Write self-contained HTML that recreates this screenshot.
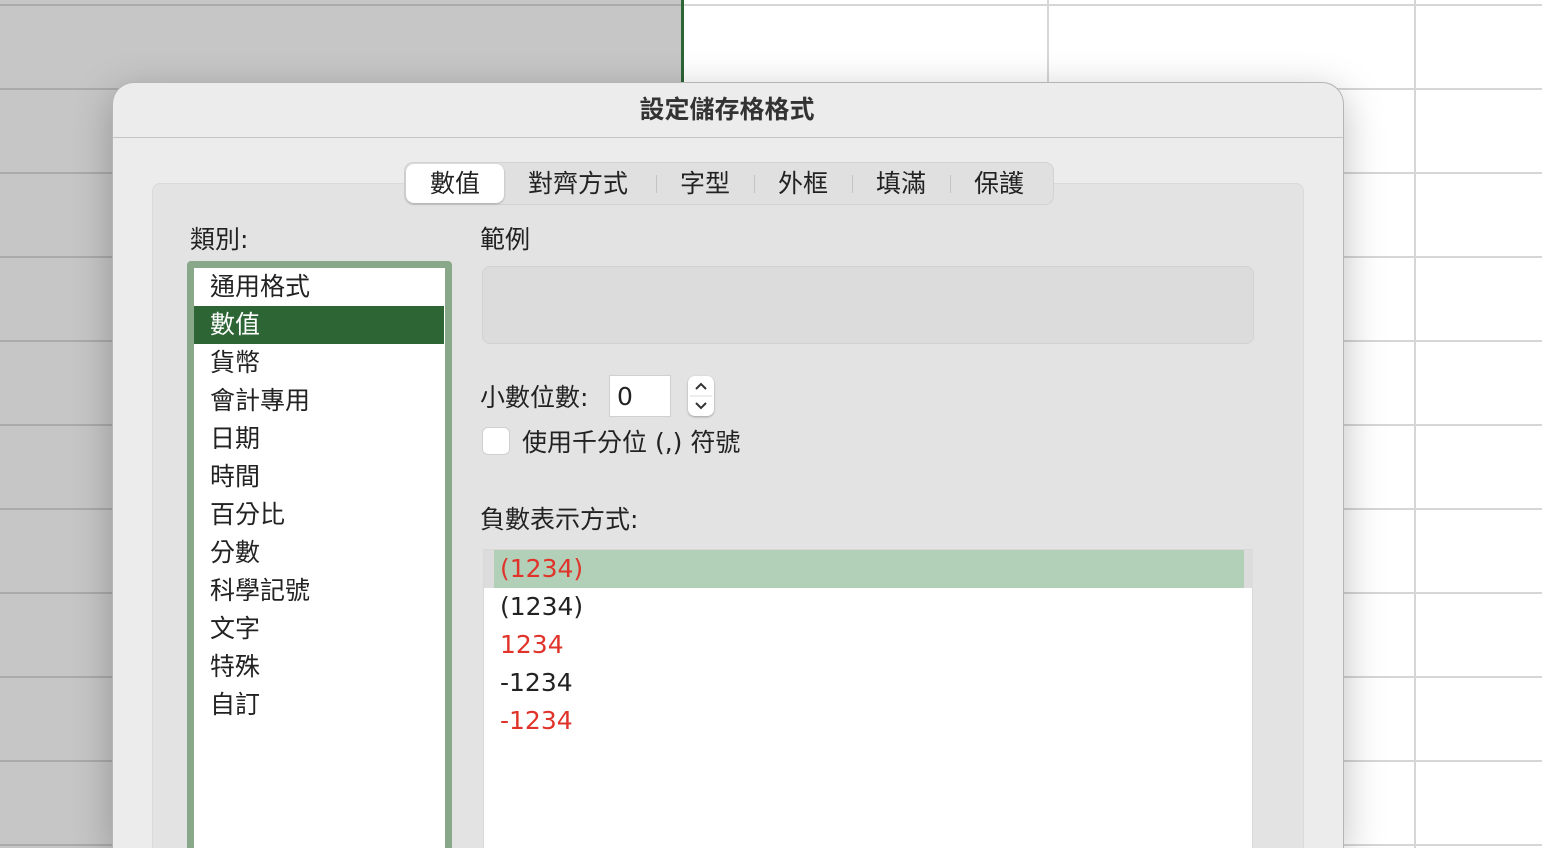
<!DOCTYPE html>
<html style="overflow:hidden;height:848px"><head><meta charset="utf-8"><style>
*{margin:0;padding:0;box-sizing:border-box}
html,body{width:1542px;height:848px;overflow:hidden}
body{position:relative;background:#fff;font-family:"DejaVu Sans","Noto Sans CJK TC",sans-serif;color:#222}
.abs{position:absolute}
.left{left:0;top:0;width:682px;height:848px;background:#c6c6c6}
.hl{position:absolute;height:2px;background:#aaa;left:0;width:682px}
.hr{position:absolute;height:2px;background:#d6d6d6;left:684px;width:858px}
.dlg{left:112px;top:82px;width:1232px;height:766px;background:#ececec;border-radius:22px 22px 0 0;border:1px solid #b5b5b5;border-bottom:none;box-shadow:0 10px 40px rgba(0,0,0,.25)}
.panel{left:152px;top:183px;width:1152px;height:665px;background:#e3e3e3;border:1px solid #dadada;border-bottom:none;border-radius:8px 8px 0 0}
.tabs{left:404px;top:162px;width:650px;height:43px;background:#e0e0e0;border:1px solid #d2d2d2;border-radius:9px}
.tab{position:absolute;top:0;height:41px;line-height:41px;font-size:25px;color:#222}
.sep{position:absolute;top:12px;width:1px;height:18px;background:#c4c4c4}
.item{position:absolute;left:0;width:250px;height:38px;line-height:38px;padding-left:16px;font-size:25px}
.neg{position:absolute;left:16px;height:38px;line-height:38px;font-size:25px}
</style></head><body>
<div class="abs left"></div>
<div class="hl" style="top:4px"></div><div class="hl" style="top:88px"></div><div class="hl" style="top:172px"></div><div class="hl" style="top:256px"></div><div class="hl" style="top:340px"></div><div class="hl" style="top:424px"></div><div class="hl" style="top:508px"></div><div class="hl" style="top:592px"></div><div class="hl" style="top:676px"></div><div class="hl" style="top:760px"></div><div class="hl" style="top:844px"></div>
<div class="hr" style="top:4px"></div><div class="hr" style="top:88px"></div><div class="hr" style="top:172px"></div><div class="hr" style="top:256px"></div><div class="hr" style="top:340px"></div><div class="hr" style="top:424px"></div><div class="hr" style="top:508px"></div><div class="hr" style="top:592px"></div><div class="hr" style="top:676px"></div><div class="hr" style="top:760px"></div><div class="hr" style="top:844px"></div>
<div class="abs" style="left:1047px;top:0;width:2px;height:848px;background:#d6d6d6"></div>
<div class="abs" style="left:1414px;top:0;width:2px;height:848px;background:#d6d6d6"></div>
<div class="abs" style="left:681px;top:0;width:3px;height:848px;background:#2d6535"></div>
<div class="abs dlg"></div>
<div class="abs" style="left:113px;top:137px;width:1230px;height:1px;background:#c4c4c4"></div>
<div class="abs" style="left:112px;top:90px;width:1230px;text-align:center;font-size:25px;font-weight:bold;color:#333">設定儲存格格式</div>
<div class="abs panel"></div>
<div class="abs tabs">
<div class="abs" style="left:1px;top:1px;width:98px;height:39px;background:#fff;border-radius:8px;box-shadow:0 1px 2px rgba(0,0,0,.25)"></div>
<div class="tab" style="left:25px">數值</div>
<div class="tab" style="left:123px">對齊方式</div>
<div class="sep" style="left:251px"></div>
<div class="tab" style="left:275px">字型</div>
<div class="sep" style="left:349px"></div>
<div class="tab" style="left:373px">外框</div>
<div class="sep" style="left:447px"></div>
<div class="tab" style="left:471px">填滿</div>
<div class="sep" style="left:545px"></div>
<div class="tab" style="left:569px">保護</div>
</div>
<div class="abs" style="left:190px;top:220px;font-size:25px">類別:</div>
<div class="abs" style="left:480px;top:220px;font-size:25px">範例</div>
<div class="abs" style="left:187px;top:261px;width:265px;height:600px;border:7px solid #89a889;border-radius:4px;background:#fff">
<div class="item" style="top:0">通用格式</div>
<div class="item" style="top:38px;background:#2d6535;color:#fff">數值</div>
<div class="item" style="top:76px">貨幣</div>
<div class="item" style="top:114px">會計專用</div>
<div class="item" style="top:152px">日期</div>
<div class="item" style="top:190px">時間</div>
<div class="item" style="top:228px">百分比</div>
<div class="item" style="top:266px">分數</div>
<div class="item" style="top:304px">科學記號</div>
<div class="item" style="top:342px">文字</div>
<div class="item" style="top:380px">特殊</div>
<div class="item" style="top:418px">自訂</div>
</div>
<div class="abs" style="left:482px;top:266px;width:772px;height:78px;background:#dcdcdc;border:1px solid #d2d2d2;border-radius:8px"></div>
<div class="abs" style="left:480px;top:378px;font-size:25px">小數位數:</div>
<div class="abs" style="left:609px;top:375px;width:62px;height:42px;background:#fff;border:1px solid #d0d0d0;font-size:25px;line-height:42px;padding-left:7px">0</div>
<div class="abs" style="left:688px;top:376px;width:26px;height:40px;background:#fff;border-radius:7px;box-shadow:0 1px 2px rgba(0,0,0,.3)">
<svg width="26" height="40" viewBox="0 0 26 40"><path d="M8 13 L13 8 L18 13" fill="none" stroke="#333" stroke-width="2"/><line x1="2" y1="20" x2="24" y2="20" stroke="#ddd"/><path d="M8 27 L13 32 L18 27" fill="none" stroke="#333" stroke-width="2"/></svg></div>
<div class="abs" style="left:482px;top:427px;width:28px;height:28px;background:#fff;border:1px solid #d0d0d0;border-radius:6px"></div>
<div class="abs" style="left:522px;top:423px;font-size:25px">使用千分位 (,) 符號</div>
<div class="abs" style="left:480px;top:500px;font-size:25px">負數表示方式:</div>
<div class="abs" style="left:483px;top:549px;width:770px;height:310px;background:#fff;border:1px solid #d8d8d8">
<div class="abs" style="left:0;top:0;width:10px;height:38px;background:#dcdcdc"></div>
<div class="abs" style="left:10px;top:0;width:750px;height:38px;background:#b2cfb8"></div>
<div class="abs" style="left:760px;top:0;width:9px;height:38px;background:#dcdcdc"></div>
<div class="neg" style="top:0;color:#e0342b">(1234)</div>
<div class="neg" style="top:38px">(1234)</div>
<div class="neg" style="top:76px;color:#e0342b">1234</div>
<div class="neg" style="top:114px">-1234</div>
<div class="neg" style="top:152px;color:#e0342b">-1234</div>
</div>
</body></html>
